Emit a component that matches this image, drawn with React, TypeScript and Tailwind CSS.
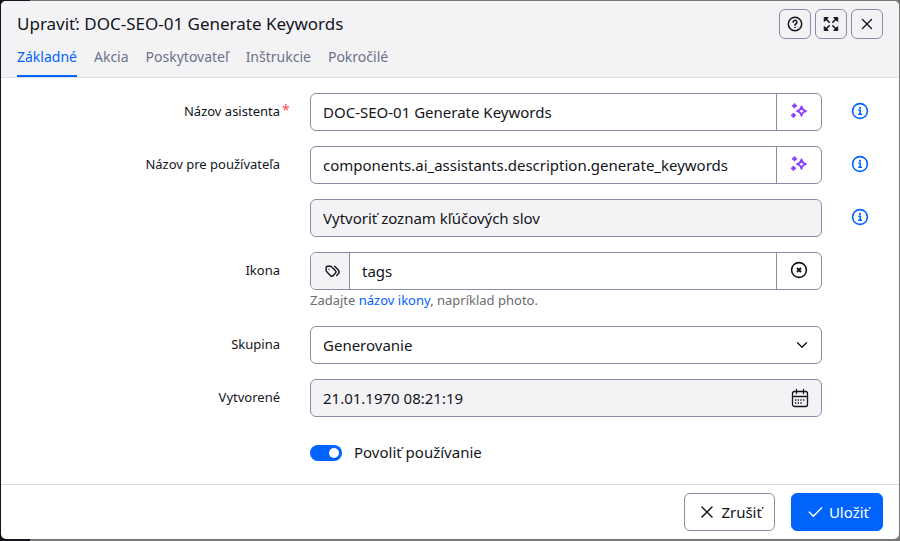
import { useState } from "react";
import type { ReactNode } from "react";
import { TbTags, TbX, TbCheck, TbChevronDown } from "react-icons/tb";

const tabs = ["Základné", "Akcia", "Poskytovateľ", "Inštrukcie", "Pokročilé"];

function HelpIcon() {
  return (
    <svg viewBox="0 0 16 16" className="size-4" fill="none" stroke="currentColor" strokeWidth="1.5" strokeLinecap="round" aria-hidden="true">
      <circle cx="8" cy="8" r="6.7" />
      <path d="M6.1 6.3a1.9 1.9 0 1 1 2.7 1.7c-.6.3-.8.6-.8 1.2" />
      <circle cx="8" cy="11.4" r=".4" fill="currentColor" strokeWidth=".8" />
    </svg>
  );
}

function ExpandIcon() {
  return (
    <svg viewBox="0 0 16 16" className="size-4" fill="none" stroke="currentColor" strokeWidth="1.6" strokeLinecap="round" strokeLinejoin="round" aria-hidden="true">
      <path d="M2 2l4.200 4.200M14 2 9.800 6.200M2 14l4.200-4.200M14 14 9.800 9.800" />
      <path fill="currentColor" strokeWidth="1" d="M1.600 1.600h3.600L1.600 5.200zM14.400 1.600h-3.600l3.600 3.600zM1.600 14.400h3.600l-3.600-3.600zM14.400 14.400h-3.600l3.600-3.600z" />
    </svg>
  );
}

function SparklesIcon() {
  return (
    <svg viewBox="0 0 18 18" className="size-[18px]" fill="none" stroke="currentColor" strokeLinejoin="round" strokeLinecap="round" aria-hidden="true">
      <path strokeWidth="1.8" d="M11.500 4.500c.6 2.900 1.500 3.900 4.500 4.600-3 .7-3.900 1.700-4.500 4.700-.6-3-1.500-4-4.500-4.700 3-.7 3.900-1.700 4.500-4.600z" />
      <path strokeWidth="2.200" d="M4.500 2.300v3M3 3.800h3M3.500 11.800v3M2 13.300h3" />
    </svg>
  );
}

function InfoIcon() {
  return (
    <svg viewBox="0 0 18 18" className="size-[18px]" fill="none" stroke="currentColor" aria-hidden="true">
      <circle cx="9" cy="9" r="7.400" strokeWidth="1.600" />
      <circle cx="9" cy="5.900" r="1.100" fill="currentColor" stroke="none" />
      <path strokeWidth="1.500" d="M7.300 8.300h1.900v4M7.200 12.300h3.800" />
    </svg>
  );
}

function ClearIcon() {
  return (
    <svg viewBox="0 0 18 18" className="size-[18px]" fill="none" stroke="currentColor" strokeWidth="1.600" aria-hidden="true">
      <circle cx="9" cy="9" r="7.400" />
      <path strokeWidth="1.900" d="m7 7 4 4m0-4-4 4" />
    </svg>
  );
}

function CalendarIcon() {
  return (
    <svg viewBox="0 0 18 20" className="h-5 w-[18px]" fill="none" stroke="currentColor" strokeWidth="1.300" strokeLinecap="round" aria-hidden="true">
      <rect x="1.500" y="3.500" width="15" height="15" rx="2" />
      <path d="M5.500 1.500v4M12.500 1.500v4M1.500 8.500h15" />
      <path strokeLinecap="butt" strokeDasharray="1.300 1.400" d="M4 12h10.500M4 15h8" />
    </svg>
  );
}

const box =
  "flex h-[38px] overflow-hidden rounded-[6px] border border-[#868ea8] text-[#13151b]";
const field = "min-w-0 flex-1 bg-transparent px-3 text-[15px] outline-none";
const headButton =
  "flex h-[30px] w-8 items-center justify-center rounded-[6px] border border-[#868ea8]";
const aiButton =
  "flex w-[45px] items-center justify-center border-l border-[#868ea8] pb-0.5 text-[#8a3ffc]";

function InfoButton() {
  return (
    <button type="button" aria-label="Pomocník" className="flex size-[18px] text-[#0063fb]">
      <InfoIcon />
    </button>
  );
}

function Row({
  label,
  htmlFor,
  required,
  info,
  children,
}: {
  label?: string;
  htmlFor?: string;
  required?: boolean;
  info?: boolean;
  children: ReactNode;
}) {
  return (
    <div className="grid grid-cols-[309fr_512fr_77fr]">
      <div className="flex h-[38px] items-center justify-end pr-[30px] text-[13px]">
        {label && (
          <label htmlFor={htmlFor} className="relative">
            {label}
            {required && <span className="absolute -top-0.5 left-full pl-0.5 text-sm leading-5 text-[#ff4b58]">*</span>}
          </label>
        )}
      </div>
      <div>{children}</div>
      <div className="flex h-9 items-center justify-center pr-0.5">{info && <InfoButton />}</div>
    </div>
  );
}

export default function App() {
  const [tab, setTab] = useState(tabs[0]);
  return (
    <div className="min-h-screen bg-[linear-gradient(to_right,#15131b_30px,#777_30px)] p-px font-['Noto_Sans',sans-serif] text-[#13151b]">
      <div role="dialog" aria-labelledby="dialog-title" className="overflow-hidden rounded-[5px] bg-white">
        <header className="border-b border-[#dcdee4] bg-[#f3f3f6] px-4 pt-2">
          <div className="flex h-[30px] items-center justify-between">
            <h1 id="dialog-title" className="text-[17px]">Upraviť: DOC-SEO-01 Generate Keywords</h1>
            <div className="flex gap-1">
              <button type="button" aria-label="Pomocník" className={headButton}><HelpIcon /></button>
              <button type="button" aria-label="Maximalizovať" className={headButton}><ExpandIcon /></button>
              <button type="button" aria-label="Zavrieť" className={headButton}><TbX size={18} strokeWidth={1.8} /></button>
            </div>
          </div>
          <nav className="flex h-[38px] gap-[17px]">
            {tabs.map((t) => (
              <button
                key={t}
                type="button"
                onClick={() => setTab(t)}
                className={
                  t === tab
                    ? "border-b-2 border-[#0063fb] text-sm text-[#0063fb]"
                    : "border-b-2 border-transparent text-sm text-[#6c7288]"
                }
              >
                {t}
              </button>
            ))}
          </nav>
        </header>

        <form className="flex flex-col gap-[15px] pt-[15px] pb-3">
          <Row label="Názov asistenta" htmlFor="name" required info>
            <div className={box}>
              <input id="name" className={field} defaultValue="DOC-SEO-01 Generate Keywords" />
              <button type="button" aria-label="AI asistent" className={aiButton}>
                <SparklesIcon />
              </button>
            </div>
          </Row>
          <Row label="Názov pre používateľa" htmlFor="user-name" info>
            <div className={box}>
              <input id="user-name" className={field} defaultValue="components.ai_assistants.description.generate_keywords" />
              <button type="button" aria-label="AI asistent" className={aiButton}>
                <SparklesIcon />
              </button>
            </div>
          </Row>
          <Row info>
            <div className={`${box} bg-[#f3f3f6]`}>
              <input aria-label="Preklad názvu" readOnly className={field} defaultValue="Vytvoriť zoznam kľúčových slov" />
            </div>
          </Row>
          <Row label="Ikona" htmlFor="icon">
            <div className={box}>
              <span className="flex w-[39px] items-center justify-center border-r border-[#868ea8] bg-[#f3f3f6] pb-0.5 pl-1">
                <TbTags size={17} />
              </span>
              <input id="icon" className={field} defaultValue="tags" />
              <button type="button" aria-label="Vymazať" className="flex w-[45px] items-center justify-center border-l border-[#868ea8] pb-0.5">
                <ClearIcon />
              </button>
            </div>
            <p className="text-[13px] leading-[21px] text-[#6b6b70]">
              Zadajte <a href="#icons" className="text-[#0063fb]">názov ikony</a>, napríklad photo.
            </p>
          </Row>
          <Row label="Skupina" htmlFor="group">
            <div className={`${box} grid`}>
              <select id="group" className="col-start-1 row-start-1 appearance-none bg-transparent px-3 text-[15px] outline-none">
                <option>Generovanie</option>
              </select>
              <TbChevronDown size={18} strokeWidth={1.8} className="pointer-events-none col-start-1 row-start-1 mr-2.5 self-center justify-self-end" />
            </div>
          </Row>
          <Row label="Vytvorené" htmlFor="created">
            <div className={`${box} items-center bg-[#f3f3f6] pr-3`}>
              <input id="created" readOnly className={field} defaultValue="21.01.1970 08:21:19" />
              <CalendarIcon />
            </div>
          </Row>
          <Row>
            <label className="flex h-10 items-center gap-3 text-[15px]">
              <input
                type="checkbox"
                role="switch"
                defaultChecked
                className="mt-0.5 h-4 w-8 appearance-none rounded-full bg-[#b9bdcb] p-[3px] before:block before:size-2.5 before:rounded-full before:bg-white checked:bg-[#0063fb] checked:before:ml-4"
              />
              Povoliť používanie
            </label>
          </Row>
        </form>

        <footer className="flex justify-end gap-4 border-t border-[#dcdee4] px-4 py-2 text-[15px]">
          <button type="button" className="flex h-[38px] items-center gap-1 rounded-[6px] border border-[#868ea8] px-3">
            <TbX size={20} strokeWidth={1.7} />
            Zrušiť
          </button>
          <button type="button" className="flex h-[38px] items-center gap-1 rounded-[6px] border border-[#0063fb] bg-[#0063fb] px-[13px] text-white">
            <TbCheck size={20} strokeWidth={1.7} />
            Uložiť
          </button>
        </footer>
      </div>
    </div>
  );
}
